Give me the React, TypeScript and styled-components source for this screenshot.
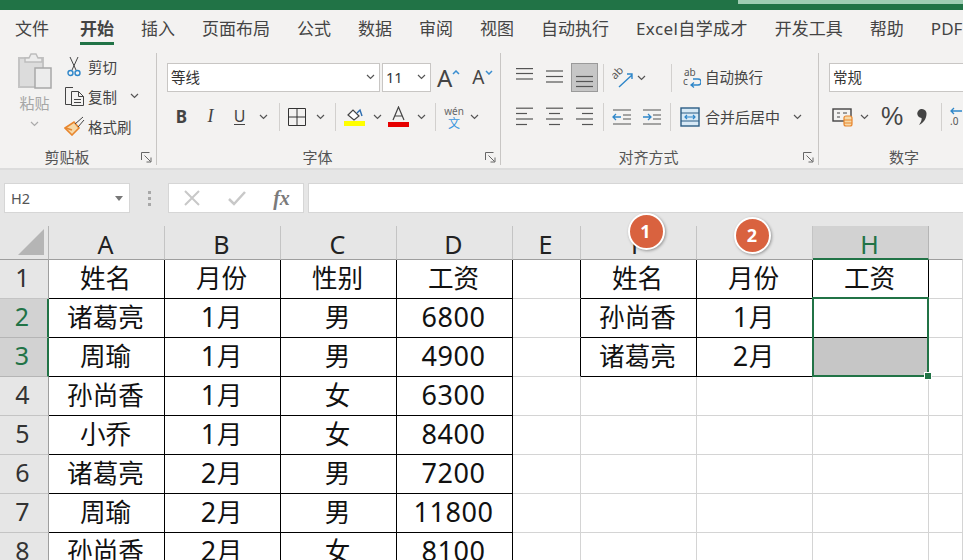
import React from "react";
import styled, { createGlobalStyle } from "styled-components";

const FONT = `"Noto Sans", "Noto Sans CJK SC", sans-serif`;

const Global = createGlobalStyle`
  html, body { margin: 0; padding: 0; height: 560px; overflow: hidden; background: #fff; }
  #root { height: 560px; overflow: hidden; }
  * { box-sizing: border-box; }
`;

const Page = styled.div`
  width: 963px; height: 560px; overflow: hidden; position: relative;
  font-family: ${FONT}; background: #fff;
`;
const TitleBar = styled.div`
  height: 10px; background: #217346; display: flex; justify-content: flex-end; align-items: flex-start;
`;
const TitleAccent = styled.div`width: 225px; height: 4px; background: #9fcdb3;`;
const RibbonWrap = styled.div`
  height: 160px; background: #f3f2f1; border-bottom: 2px solid #dcdcdc; overflow: hidden;
`;
const Tabs = styled.nav`
  height: 37px; display: flex; gap: 27px; padding-left: 15px; white-space: nowrap; overflow: hidden;
`;
const Tab = styled.div<{ $active?: boolean; $wide?: boolean }>`
  height: 35px; padding-top: 5px; font-size: 17px; line-height: 28px; color: #444;
  ${p => p.$active ? `font-weight: 700; margin-left: 4px; border-bottom: 3px solid #217346;` : ""}
  ${p => p.$wide ? `letter-spacing: 0.4px;` : ""}
`;
const Groups = styled.div`display: flex; height: 112px; margin-top: 6px;`;
const Group = styled.section<{ $w: number; $last?: boolean }>`
  flex: 0 0 ${p => p.$w}px; display: flex; flex-direction: column; height: 112px; padding-top: 10px;
  border-right: ${p => p.$last ? "none" : "1px solid #c8c6c4"};
`;
const GroupBody = styled.div`flex: 1; display: flex; flex-direction: column; gap: 10px;`;
const Footer = styled.div`
  height: 16px; display: grid; grid-template-columns: 1fr auto 1fr; align-items: center;
  font-size: 15px; line-height: 16px; color: #555;
`;
const FooterLabel = styled.span<{ $shift?: number }>`margin-right: ${p => p.$shift ?? 0}px;`;
const Launcher = styled.span`justify-self: end; margin-right: 4px; display: flex;`;
const Row = styled.div<{ $pl?: number }>`
  display: flex; align-items: center; height: 29px; padding-left: ${p => p.$pl ?? 0}px;
`;
const Slot = styled.div<{ $w: number; $ml?: number }>`
  flex: 0 0 ${p => p.$w}px; margin-left: ${p => p.$ml ?? 0}px; height: 29px;
  display: flex; align-items: center; justify-content: center; color: #444;
`;
const ActiveSlot = styled(Slot)`background: #c6c6c6; border: 1px solid #9a9a9a;`;
const Sep = styled.div<{ $ml: number }>`
  flex: 0 0 1px; height: 28px; margin-left: ${p => p.$ml}px; background: #d2d0ce;
`;
const Select = styled.div<{ $w: number; $ml?: number }>`
  flex: 0 0 ${p => p.$w}px; margin-left: ${p => p.$ml ?? 0}px; height: 29px; background: #fff;
  border: 1px solid #c8c6c4; display: flex; align-items: center; justify-content: space-between;
  padding: 0 4px 2px 3px; font-size: 14.5px; color: #333;
`;
const BoldLetter = styled.span`font: 700 17px "Noto Sans", sans-serif; color: #444;`;
const ItalicLetter = styled.span`font: italic 400 18px "Liberation Serif", serif; color: #444;`;
const UnderLetter = styled.span`font: 400 16px "Noto Sans", sans-serif; color: #444; border-bottom: 1px solid #444; line-height: 16px;`;
const BigA = styled.span<{ $s: number }>`font: 400 ${p => p.$s}px "Noto Sans", sans-serif; color: #444; line-height: 1;`;
const Percent = styled.span`font: 400 25px "Liberation Sans", sans-serif; color: #444;`;
const SmallLabel = styled.span<{ $ml?: number }>`
  font-size: 14.5px; color: #444; white-space: nowrap; margin-left: ${p => p.$ml ?? 0}px;
`;
const WrapLabel = styled(SmallLabel)`padding-bottom: 2px;`;
const MergeLabel = styled(SmallLabel)`font-size: 15px;`;
const Clip = styled.div`display: flex; height: 90px; margin-top: -12px;`;
const PasteCol = styled.div`
  flex: 0 0 63px; padding: 0 0 0 6px; display: flex; flex-direction: column; align-items: center;
`;
const PasteLabel = styled.span`font-size: 15px; color: #a6a6a6; line-height: 19px; margin-top: 5px; margin-bottom: 8px;`;
const ClipList = styled.div`display: flex; flex-direction: column;`;
const ClipRow = styled.div`height: 30px; display: flex; align-items: center; gap: 3px; width: 84px;`;
const ClipIcon = styled.span`flex: 0 0 22px; display: flex; justify-content: center;`;
const WenStack = styled.span`
  display: flex; flex-direction: column; align-items: center; line-height: 11px;
`;
const Wen = styled.span`font: 400 10px "Noto Sans", sans-serif; color: #666;`;
const WenZi = styled.span`font-size: 12px; color: #3a96dd;`;

/* formula bar */
const FormulaBar = styled.div`
  height: 56px; background: #e6e6e6; padding: 13px 0 0 4px; display: flex; align-items: flex-start;
`;
const NameBox = styled.div`
  width: 126px; height: 30px; background: #fff; border: 1px solid #d6d6d6; padding: 0 6px;
  display: flex; align-items: center; justify-content: space-between;
  font: 400 14.5px "Noto Sans", sans-serif; color: #555;
`;
const Grip = styled.div`
  width: 38px; height: 30px; display: flex; flex-direction: column; gap: 3px; align-items: center; justify-content: center;
`;
const GripDot = styled.i`width: 3px; height: 3px; background: #a8a8a8; display: block;`;
const FxBox = styled.div`
  width: 136px; height: 30px; background: #fff; border: 1px solid #d6d6d6; display: flex; align-items: center;
`;
const FxSlot = styled.div`flex: 0 0 45px; display: flex; justify-content: center; align-items: center;`;
const FxText = styled.span`font: italic 700 20px "Liberation Serif", serif; color: #7a7a7a;`;
const FormulaInput = styled.div`
  flex: 1; height: 30px; margin-left: 4px; background: #fff; border: 1px solid #d6d6d6; border-right: none;
`;

/* sheet */
const Sheet = styled.div`
  position: relative; display: grid;
  grid-template-columns: 49px repeat(4, 116px) 68px repeat(3, 116px) 34px;
  grid-template-rows: 34px repeat(8, 39px);
  background: #fff;
`;
const Corner = styled.div`
  background: #e6e6e6; border-right: 1px solid #b5b5b5; border-bottom: 1px solid #9e9e9e;
  display: flex; align-items: flex-end; justify-content: flex-end; padding: 0 4px 4px 0;
`;
const ColHead = styled.div<{ $sel?: boolean; $blank?: boolean }>`
  background: ${p => p.$sel ? "#d2d2d2" : "#e6e6e6"};
  border-right: 1px solid ${p => p.$blank ? "transparent" : p.$sel ? "#b5b5b5" : "#c4c4c4"};
  border-bottom: ${p => p.$sel ? "2px solid #217346" : "1px solid #9e9e9e"};
  color: ${p => p.$sel ? "#217346" : "#222"};
  font: 400 25px/36px "Noto Sans", sans-serif; text-align: center; height: 34px; overflow: hidden;
  padding-right: 2px;
`;
const RowHead = styled.div<{ $sel?: boolean }>`
  background: ${p => p.$sel ? "#d2d2d2" : "#e6e6e6"};
  border-bottom: 1px solid ${p => p.$sel ? "#b5b5b5" : "#c4c4c4"};
  border-right: ${p => p.$sel ? "2px solid #217346" : "1px solid #9e9e9e"};
  color: ${p => p.$sel ? "#217346" : "#333"};
  font: 400 25px/35px "Noto Sans", sans-serif; text-align: center; padding-right: 3px; overflow: hidden;
`;
const Cell = styled.div<{ $boxed?: boolean; $edge?: boolean; $fill?: boolean }>`
  border-right: 1px solid ${p => (p.$boxed || p.$edge) ? "#000" : "#d4d4d4"};
  border-bottom: 1px solid ${p => p.$boxed ? "#000" : "#d4d4d4"};
  background: ${p => p.$fill ? "#c6c6c6" : "#fff"};
  font-size: 25.6px; line-height: 34px; text-align: center; color: #111; white-space: nowrap;
  font-family: "Noto Sans CJK SC", sans-serif; overflow: hidden; padding-right: 2px;
`;
const Num = styled.span`font: 400 27px/34px "Noto Sans", sans-serif; letter-spacing: 0.6px;`;
const Selection = styled.div`
  position: absolute; left: 812px; top: 71px; width: 117px; height: 80px; border: 2px solid #217346; pointer-events: none;
`;
const Handle = styled.div`
  position: absolute; right: -4px; bottom: -4px; width: 6px; height: 6px; background: #217346; border: 1px solid #fff; box-sizing: content-box; margin: -1px;
`;
const Badge = styled.div<{ $x: number; $y: number }>`
  position: absolute; left: ${p => p.$x - 18.5}px; top: ${p => p.$y - 18.5}px; width: 37px; height: 37px; border-radius: 50%;
  background: #d9623f; border: 2px solid #fff; box-shadow: 1px 1px 3px rgba(0,0,0,.35);
  color: #fff; font: 700 18px/32px "Noto Sans", sans-serif; text-align: center; padding-right: 1px;
`;

const Chev = ({ c = "#555" }: { c?: string }) => (
  <svg width="9" height="6" viewBox="0 0 9 6"><path d="M1 1l3.5 3.5L8 1" fill="none" stroke={c} strokeWidth="1.2" /></svg>
);
const Launch = () => (
  <svg width="11" height="11" viewBox="0 0 11 11" fill="none" stroke="#666"><path d="M.5 8V.5h8" /><path d="M3.500 3.500l6 6M10 5.500v4.500H5.500" /></svg>
);
const Paste = () => (
  <svg width="36" height="38" viewBox="0 0 36 38">
    <rect x="2" y="7" width="24" height="29" fill="#dcdcdc" stroke="#c4c4c4" strokeWidth="2" />
    <path d="M8 7h4l2-4h5l2 4h4v4H8z" fill="#ececec" stroke="#bdbdbd" strokeWidth="1.500" />
    <rect x="18" y="17" width="16" height="20" fill="#ececec" stroke="#a8a8a8" strokeWidth="1.500" />
  </svg>
);
const Scissors = () => (
  <svg width="14" height="21" viewBox="0 0 14 21" fill="none">
    <path d="M3 1l6 13M11 1L5 14" stroke="#444" strokeWidth="1" />
    <circle cx="3.500" cy="17" r="2.500" stroke="#2e86c9" strokeWidth="1.400" />
    <circle cx="10.500" cy="17" r="2.500" stroke="#2e86c9" strokeWidth="1.400" />
  </svg>
);
const Copy = () => (
  <svg width="21" height="20" viewBox="0 0 21 20" fill="none" stroke="#444">
    <path d="M8 18.500H1.500V1.500H9" />
    <path d="M7.500 5.500h7l5 5v9h-12z" fill="#f3f2f1" />
    <path d="M14.500 5.500v5h5M10 13.500h7M10 16.500h7" />
  </svg>
);
const Painter = () => (
  <svg width="21" height="20" viewBox="0 0 21 20">
    <path d="M1 12l9-6 5 6-7 7z" fill="#f6d9a8" stroke="#e8862e" strokeWidth="1.600" />
    <path d="M11 8l8-7M14 11l6-7" stroke="#444" strokeWidth="1" fill="none" />
    <path d="M2 12l6 2" stroke="#e8862e" strokeWidth="1.400" />
  </svg>
);
const Borders = () => (
  <svg width="20" height="20" viewBox="0 0 20 20" fill="none" stroke="#333"><path d="M1.500 1.500h17v17h-17zM10 1.500v17M1.500 10h17" /></svg>
);
const FillColor = () => (
  <svg width="21" height="20" viewBox="0 0 21 20">
    <path d="M4 8l5-5 6 6-5 4z" fill="#fff" stroke="#444" strokeWidth="1.200" />
    <path d="M13 6l3-3 2 6" fill="none" stroke="#2b6cb0" strokeWidth="1.400" />
    <rect x="0" y="14" width="21" height="5" fill="#ffff00" />
  </svg>
);
const FontColor = () => (
  <svg width="21" height="22" viewBox="0 0 21 22">
    <path d="M5 14l5.500-13L16 14M7 10h7" fill="none" stroke="#444" strokeWidth="1.200" />
    <rect x="0" y="16" width="21" height="5" fill="#e60000" />
  </svg>
);
const Lines = ({ y, w = [17, 17, 17], x = [0, 0, 0] }: { y: number[]; w?: number[]; x?: number[] }) => (
  <svg width="20" height="20" viewBox="0 0 20 20" stroke="#555" strokeWidth="1.200">
    {y.map((v, i) => <line key={i} x1={1 + x[i]} x2={1 + x[i] + w[i]} y1={v} y2={v} />)}
  </svg>
);
const Orient = () => (
  <svg width="22" height="22" viewBox="0 0 22 22" fill="none">
    <text x="0" y="0" fontSize="11" fill="#555" fontFamily="Noto Sans" transform="translate(3 13) rotate(-45)">ab</text>
    <path d="M7 20L20 8M15 7h5v5" stroke="#2e86c9" strokeWidth="1.400" />
  </svg>
);
const Indent = ({ dir }: { dir: 1 | -1 }) => (
  <svg width="20" height="20" viewBox="0 0 20 20" fill="none">
    <path d="M1 3h18M1 17h18M11 8h8M11 12h8" stroke="#555" strokeWidth="1.200" />
    {dir === -1
      ? <path d="M9 10H1M4 7l-3 3 3 3" stroke="#2e86c9" strokeWidth="1.300" />
      : <path d="M1 10h8M6 7l3 3-3 3" stroke="#2e86c9" strokeWidth="1.300" />}
  </svg>
);
const Wrap = () => (
  <svg width="18" height="20" viewBox="0 0 18 20" fill="none">
    <text x="1" y="8" fontSize="10" fill="#555" fontFamily="Noto Sans">ab</text>
    <text x="0" y="17" fontSize="10" fill="#555" fontFamily="Noto Sans">c</text>
    <path d="M10 11h5a2 2 0 0 1 0 6H9M11 14.500l-3 2.500 3 2.500" stroke="#2e86c9" strokeWidth="1.300" />
  </svg>
);
const Merge = () => (
  <svg width="20" height="20" viewBox="0 0 20 20" fill="none">
    <rect x="1" y="1" width="18" height="18" stroke="#2b5d85" strokeWidth="1.400" fill="#d7e9f6" />
    <path d="M1 6h18M1 14h18" stroke="#2b5d85" />
    <path d="M5 10h10M7 8l-2 2 2 2M13 8l2 2-2 2" stroke="#2e86c9" strokeWidth="1.200" />
  </svg>
);
const Currency = () => (
  <svg width="21" height="20" viewBox="0 0 21 20" fill="none">
    <rect x="1" y="2" width="18" height="12" stroke="#444" strokeWidth="1.400" />
    <path d="M5 6h3M5 10h3M11 6h4" stroke="#444" />
    <rect x="12" y="9" width="8" height="10" rx="2" fill="#f6d9a8" stroke="#e8862e" strokeWidth="1.200" />
    <path d="M12 13h8M12 16h8" stroke="#e8862e" />
  </svg>
);
const Comma = () => (
  <svg width="10" height="16" viewBox="0 0 10 16"><path d="M5 0a4.500 4.500 0 0 1 4.500 5C9.500 10 6 14 2 16c2-3 3-5 2.500-7A4.500 4.500 0 0 1 5 0z" fill="#444" /></svg>
);
const Decimal = () => (
  <svg width="20" height="22" viewBox="0 0 20 22" fill="none">
    <path d="M13 5H2M5 2L2 5l3 3" stroke="#2e86c9" strokeWidth="1.300" />
    <text x="1" y="19" fontSize="10" fill="#555" fontFamily="Noto Sans">.0</text>
  </svg>
);
const CaretMark = styled.svg`align-self: flex-start; margin-top: 7px;`;
const Caret = ({ up }: { up?: boolean }) => (
  <CaretMark width="8" height="5" viewBox="0 0 8 5">
    <path d={up ? "M1 4l3-3 3 3" : "M1 1l3 3 3-3"} fill="none" stroke="#3a8ed0" strokeWidth="1.500" />
  </CaretMark>
);

const tabs = ["文件", "开始", "插入", "页面布局", "公式", "数据", "审阅", "视图", "自动执行", "Excel自学成才", "开发工具", "帮助", "PDF"];
const cols = ["A", "B", "C", "D", "E", "F", "", "H", ""];
const left = [
  ["姓名", "月份", "性别", "工资"],
  ["诸葛亮", "1月", "男", "6800"],
  ["周瑜", "1月", "男", "4900"],
  ["孙尚香", "1月", "女", "6300"],
  ["小乔", "1月", "女", "8400"],
  ["诸葛亮", "2月", "男", "7200"],
  ["周瑜", "2月", "男", "11800"],
  ["孙尚香", "2月", "女", "8100"],
];
const right = [
  ["姓名", "月份", "工资"],
  ["孙尚香", "1月", ""],
  ["诸葛亮", "2月", ""],
];

const Rich = ({ t }: { t: string }) => (
  <>{t.split(/(\d+)/).map((s, i) => (/^\d+$/.test(s) ? <Num key={i}>{s}</Num> : s))}</>
);

export default function App() {
  return (
    <Page>
      <Global />
      <TitleBar><TitleAccent /></TitleBar>
      <RibbonWrap>
        <Tabs>{tabs.map(t => <Tab key={t} $active={t === "开始"} $wide={t.startsWith("Excel")}>{t}</Tab>)}</Tabs>
        <Groups>
          <Group $w={157}>
            <GroupBody>
              <Clip>
                <PasteCol>
                  <Paste />
                  <PasteLabel>粘贴</PasteLabel>
                  <Chev c="#aaa" />
                </PasteCol>
                <ClipList>
                  <ClipRow><ClipIcon><Scissors /></ClipIcon><SmallLabel>剪切</SmallLabel></ClipRow>
                  <ClipRow><ClipIcon><Copy /></ClipIcon><SmallLabel>复制</SmallLabel><Slot $w={9} $ml={10}><Chev /></Slot></ClipRow>
                  <ClipRow><ClipIcon><Painter /></ClipIcon><SmallLabel>格式刷</SmallLabel></ClipRow>
                </ClipList>
              </Clip>
            </GroupBody>
            <Footer><span /><FooterLabel $shift={22}>剪贴板</FooterLabel><Launcher><Launch /></Launcher></Footer>
          </Group>

          <Group $w={344}>
            <GroupBody>
              <Row $pl={10}>
                <Select $w={213}><span>等线</span><Chev /></Select>
                <Select $w={49} $ml={2}><span>11</span><Chev /></Select>
                <Slot $w={20} $ml={6}><BigA $s={24}>A</BigA><Caret up /></Slot>
                <Slot $w={20} $ml={12}><BigA $s={19}>A</BigA><Caret /></Slot>
              </Row>
              <Row $pl={10}>
                <Slot $w={29}><BoldLetter>B</BoldLetter></Slot>
                <Slot $w={29}><ItalicLetter>I</ItalicLetter></Slot>
                <Slot $w={29}><UnderLetter>U</UnderLetter></Slot>
                <Slot $w={18}><Chev /></Slot>
                <Sep $ml={7} />
                <Slot $w={20} $ml={7}><Borders /></Slot>
                <Slot $w={12} $ml={7}><Chev /></Slot>
                <Sep $ml={9} />
                <Slot $w={21} $ml={8}><FillColor /></Slot>
                <Slot $w={12} $ml={6}><Chev /></Slot>
                <Slot $w={21} $ml={5}><FontColor /></Slot>
                <Slot $w={12} $ml={6}><Chev /></Slot>
                <Sep $ml={8} />
                <Slot $w={20} $ml={8}><WenStack><Wen>wén</Wen><WenZi>文</WenZi></WenStack></Slot>
                <Slot $w={12} $ml={4}><Chev /></Slot>
              </Row>
            </GroupBody>
            <Footer><span /><FooterLabel $shift={22}>字体</FooterLabel><Launcher><Launch /></Launcher></Footer>
          </Group>

          <Group $w={318}>
            <GroupBody>
              <Row $pl={14}>
                <Slot $w={20}><Lines y={[0.6, 5.5, 11]} /></Slot>
                <Slot $w={20} $ml={10}><Lines y={[3, 8.5, 14]} /></Slot>
                <ActiveSlot $w={27} $ml={6}><Lines y={[8.5, 13.5, 18.5]} /></ActiveSlot>
                <Sep $ml={5} />
                <Slot $w={22} $ml={8}><Orient /></Slot>
                <Slot $w={9} $ml={3}><Chev /></Slot>
                <Sep $ml={25} />
                <Slot $w={18} $ml={11}><Wrap /></Slot>
                <WrapLabel $ml={4}>自动换行</WrapLabel>
              </Row>
              <Row $pl={14}>
                <Slot $w={20}><Lines y={[1.2, 6.5, 12, 17.5]} w={[17, 11, 17, 11]} x={[0, 0, 0, 0]} /></Slot>
                <Slot $w={20} $ml={10}><Lines y={[1.2, 6.5, 12, 17.5]} w={[17, 11, 17, 11]} x={[0, 3, 0, 3]} /></Slot>
                <Slot $w={20} $ml={10}><Lines y={[1.2, 6.5, 12, 17.5]} w={[17, 11, 17, 11]} x={[0, 6, 0, 6]} /></Slot>
                <Sep $ml={8} />
                <Slot $w={20} $ml={8}><Indent dir={-1} /></Slot>
                <Slot $w={20} $ml={10}><Indent dir={1} /></Slot>
                <Sep $ml={8} />
                <Slot $w={20} $ml={9}><Merge /></Slot>
                <MergeLabel $ml={5}>合并后居中</MergeLabel>
                <Slot $w={9} $ml={13}><Chev /></Slot>
              </Row>
            </GroupBody>
            <Footer><span /><FooterLabel $shift={22}>对齐方式</FooterLabel><Launcher><Launch /></Launcher></Footer>
          </Group>

          <Group $w={144} $last>
            <GroupBody>
              <Row $pl={10}>
                <Select $w={160}><span>常规</span></Select>
              </Row>
              <Row $pl={13}>
                <Slot $w={21}><Currency /></Slot>
                <Slot $w={9} $ml={7}><Chev /></Slot>
                <Slot $w={22} $ml={12}><Percent>%</Percent></Slot>
                <Slot $w={10} $ml={14}><Comma /></Slot>
                <Sep $ml={14} />
                <Slot $w={20} $ml={7}><Decimal /></Slot>
              </Row>
            </GroupBody>
            <Footer><span /><span>数字</span><span /></Footer>
          </Group>
        </Groups>
      </RibbonWrap>

      <FormulaBar>
        <NameBox>H2<svg width="8" height="5" viewBox="0 0 8 5"><path d="M0 0h8L4 5z" fill="#777" /></svg></NameBox>
        <Grip><GripDot /><GripDot /><GripDot /></Grip>
        <FxBox>
          <FxSlot><svg width="16" height="16" viewBox="0 0 16 16"><path d="M1 1l14 14M15 1L1 15" stroke="#c8c8c8" strokeWidth="2" /></svg></FxSlot>
          <FxSlot><svg width="18" height="16" viewBox="0 0 18 16"><path d="M1 9l5 5L17 2" fill="none" stroke="#c8c8c8" strokeWidth="2.500" /></svg></FxSlot>
          <FxSlot><FxText>fx</FxText></FxSlot>
        </FxBox>
        <FormulaInput />
      </FormulaBar>

      <Sheet>
        <Corner><svg width="26" height="26" viewBox="0 0 26 26"><path d="M26 0v26H0z" fill="#b5b5b5" /></svg></Corner>
        {cols.map((c, i) => <ColHead key={i} $sel={c === "H"} $blank={i === 8}>{c}</ColHead>)}
        {left.map((r, ri) => (
          <React.Fragment key={ri}>
            <RowHead $sel={ri === 1 || ri === 2}>{ri + 1}</RowHead>
            {r.map((t, ci) => <Cell key={ci} $boxed><Rich t={t} /></Cell>)}
            <Cell $edge={ri < 3} />
            {[0, 1, 2].map(ci => (
              <Cell key={ci} $boxed={ri < 3} $fill={ri === 2 && ci === 2}>
                {ri < 3 ? <Rich t={right[ri][ci]} /> : null}
              </Cell>
            ))}
            <Cell />
          </React.Fragment>
        ))}
        <Selection><Handle /></Selection>
        <Badge $x={646} $y={5}>1</Badge>
        <Badge $x={752.5} $y={9.5}>2</Badge>
      </Sheet>
    </Page>
  );
}
